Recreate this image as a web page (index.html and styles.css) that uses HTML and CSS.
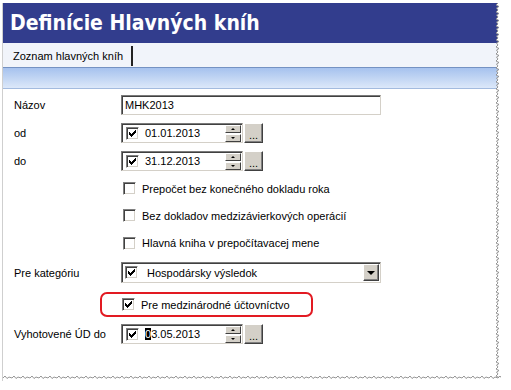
FILE: index.html
```html
<!DOCTYPE html>
<html lang="sk">
<head>
    <meta charset="UTF-8">
    <meta name="viewport" content="width=device-width, initial-scale=1.0">
    <title>Definície Hlavných kníh</title>
    <link rel="stylesheet" href="styles.css">
</head>
<body>
    <div class="window">
        <div class="titlebar">Definície Hlavných kníh</div>
        <div class="tabs"><span class="tab">Zoznam hlavných kníh</span></div>
        <div class="band"></div>

        <div class="form">
            <div class="label">Názov</div>
            <div class="ctl"><div class="textbox">MHK2013</div></div>

            <div class="label">od</div>
            <div class="ctl">
                <div class="datebox">
                    <span class="check"><svg width="7" height="7" viewBox="0 0 7 7"><path d="M6 0h1v1h-1z M5 1h2v1h-2z M0 2h1v1h-1z M4 2h3v1h-3z M0 3h2v1h-2z M3 3h3v1h-3z M0 4h5v1h-5z M1 5h3v1h-3z M2 6h1v1h-1z"/></svg></span>
                    <span class="date">01.01.2013</span>
                    <span class="spin"><span class="spin-btn up"></span><span class="spin-btn down"></span></span>
                </div>
                <span class="dots">...</span>
            </div>

            <div class="label">do</div>
            <div class="ctl">
                <div class="datebox">
                    <span class="check"><svg width="7" height="7" viewBox="0 0 7 7"><path d="M6 0h1v1h-1z M5 1h2v1h-2z M0 2h1v1h-1z M4 2h3v1h-3z M0 3h2v1h-2z M3 3h3v1h-3z M0 4h5v1h-5z M1 5h3v1h-3z M2 6h1v1h-1z"/></svg></span>
                    <span class="date">31.12.2013</span>
                    <span class="spin"><span class="spin-btn up"></span><span class="spin-btn down"></span></span>
                </div>
                <span class="dots">...</span>
            </div>

            <div class="label"></div>
            <div class="ctl checkrow"><span class="check"></span>Prepočet bez konečného dokladu roka</div>

            <div class="label"></div>
            <div class="ctl checkrow"><span class="check"></span>Bez dokladov medzizávierkových operácií</div>

            <div class="label"></div>
            <div class="ctl checkrow"><span class="check"></span>Hlavná kniha v prepočítavacej mene</div>

            <div class="label">Pre kategóriu</div>
            <div class="ctl">
                <div class="combo">
                    <span class="check"><svg width="7" height="7" viewBox="0 0 7 7"><path d="M6 0h1v1h-1z M5 1h2v1h-2z M0 2h1v1h-1z M4 2h3v1h-3z M0 3h2v1h-2z M3 3h3v1h-3z M0 4h5v1h-5z M1 5h3v1h-3z M2 6h1v1h-1z"/></svg></span>
                    <span class="combo-text">Hospodársky výsledok</span>
                    <span class="drop"></span>
                </div>
            </div>

            <div class="label"></div>
            <div class="ctl">
                <div class="mark">
                    <span class="check"><svg width="7" height="7" viewBox="0 0 7 7"><path d="M6 0h1v1h-1z M5 1h2v1h-2z M0 2h1v1h-1z M4 2h3v1h-3z M0 3h2v1h-2z M3 3h3v1h-3z M0 4h5v1h-5z M1 5h3v1h-3z M2 6h1v1h-1z"/></svg></span>
                    Pre medzinárodné účtovníctvo
                </div>
            </div>

            <div class="label">Vyhotovené ÚD do</div>
            <div class="ctl">
                <div class="datebox">
                    <span class="check"><svg width="7" height="7" viewBox="0 0 7 7"><path d="M6 0h1v1h-1z M5 1h2v1h-2z M0 2h1v1h-1z M4 2h3v1h-3z M0 3h2v1h-2z M3 3h3v1h-3z M0 4h5v1h-5z M1 5h3v1h-3z M2 6h1v1h-1z"/></svg></span>
                    <span class="date"><span class="sel">0</span>3.05.2013</span>
                    <span class="spin"><span class="spin-btn up"></span><span class="spin-btn down"></span></span>
                </div>
                <span class="dots">...</span>
            </div>
        </div>

        <!-- torn paper edges -->
        <svg class="torn-right" width="6" height="378">
            <defs>
                <pattern id="zr" width="6" height="7" patternUnits="userSpaceOnUse">
                    <path d="M3 0 L1 2 L4 3.5 L1.5 5 L3 7 L6 7 L6 0Z" fill="#fff"/>
                    <path d="M3 0 L1 2 L4 3.5 L1.5 5 L3 7" fill="none" stroke="#8a8a8a" stroke-width="0.9"/>
                </pattern>
            </defs>
            <rect width="6" height="378" fill="url(#zr)"/>
        </svg>
        <svg class="torn-bottom" width="498" height="6">
            <defs>
                <pattern id="zb" width="9" height="6" patternUnits="userSpaceOnUse">
                    <path d="M0 3 L2 1 L4 3.5 L6 2 L9 3 L9 6 L0 6Z" fill="#fff"/>
                    <path d="M0 3 L2 1 L4 3.5 L6 2 L9 3" fill="none" stroke="#8a8a8a" stroke-width="0.9"/>
                </pattern>
            </defs>
            <rect width="498" height="6" fill="url(#zb)"/>
        </svg>
    </div>
</body>
</html>
```

FILE: styles.css
```css
body {
    margin: 0;
    background-color: #fff;
    font-family: "Liberation Sans", Arial, sans-serif;
    font-size: 11px;
    color: #000;
}

.window {
    position: relative;
    margin: 3px 0 0 2px;
    width: 498px;
    height: 378px;
    border-left: 1px solid #cfcfcf;
    overflow: hidden;
    background-color: #fff;
}

.titlebar {
    height: 40px;
    line-height: 40px;
    padding-left: 7px;
    background-color: #323d8d;
    color: #fff;
    font-family: "Liberation Sans Narrow", "Arial Narrow", "DejaVu Sans Condensed", sans-serif;
    font-size: 21px;
    font-weight: bold;
}

.tabs {
    height: 24px;
    display: flex;
    align-items: flex-end;
    background-color: #f1f4fa;
}

.tab {
    height: 20px;
    line-height: 20px;
    margin-bottom: 1px;
    padding: 0 8px 0 10px;
    border-right: 2px solid #222;
}

.band {
    height: 20px;
    border-top: 1px solid #7592c2;
    border-bottom: 1px solid #a3bbdf;
    background: linear-gradient(#a6c2ee, #dce8f9);
}

.form {
    display: grid;
    grid-template-columns: 118px 260px;
    grid-template-rows: 28px 28px 28px 27px 27px 28px 31px 33px 26px;
    align-items: center;
    padding-top: 2px;
}

.label {
    padding-left: 11px;
}

.ctl {
    display: flex;
    align-items: center;
}

.checkrow {
    padding-left: 2px;
    gap: 6px;
}

.check {
    width: 13px;
    height: 13px;
    box-sizing: border-box;
    display: flex;
    align-items: center;
    justify-content: center;
    flex: none;
    border: 1px solid;
    border-color: #808080 #fff #fff #808080;
    box-shadow: inset 1px 1px #404040, inset -1px -1px #d4d0c8;
    background-color: #fff;
}

.check svg {
    shape-rendering: crispEdges;
}

.textbox, .datebox, .combo {
    box-sizing: border-box;
    border: 1px solid;
    border-color: #7a7a7a #d4d0c8 #d4d0c8 #7a7a7a;
    box-shadow: inset 1px 1px #404040;
    background-color: #fff;
}

.textbox {
    width: 260px;
    height: 20px;
    line-height: 18px;
    padding-left: 3px;
}

.datebox {
    width: 122px;
    height: 20px;
    display: flex;
    align-items: center;
    padding-left: 4px;
}

.date {
    margin-left: 6px;
}

.sel {
    background-color: #000;
    color: #fff;
}

.spin {
    margin-left: auto;
    margin-right: 1px;
    width: 16px;
    height: 17px;
    display: flex;
    flex-direction: column;
    justify-content: space-between;
}

.spin-btn {
    height: 8px;
    box-sizing: border-box;
    display: flex;
    align-items: center;
    justify-content: center;
    background-color: #d4d0c8;
    border: 1px solid;
    border-color: #fff #404040 #404040 #fff;
}

.spin-btn::after {
    content: "";
    border-left: 2px solid transparent;
    border-right: 2px solid transparent;
}

.up::after {
    border-bottom: 2px solid #000;
}

.down::after {
    border-top: 2px solid #000;
}

.dots {
    width: 19px;
    height: 20px;
    margin-left: 1px;
    box-sizing: border-box;
    background-color: #d4d0c8;
    border: 1px solid;
    border-color: #fff #404040 #404040 #fff;
    box-shadow: inset -1px -1px #808080;
    text-align: center;
    line-height: 22px;
}

.combo {
    width: 260px;
    height: 21px;
    display: flex;
    align-items: center;
    padding-left: 3px;
}

.combo-text {
    margin-left: 9px;
}

.drop {
    margin-left: auto;
    margin-right: 1px;
    width: 16px;
    height: 17px;
    box-sizing: border-box;
    display: flex;
    align-items: center;
    justify-content: center;
    background-color: #d4d0c8;
    border: 1px solid;
    border-color: #fff #404040 #404040 #fff;
    box-shadow: inset -1px -1px #808080;
}

.drop::after {
    content: "";
    border-left: 4px solid transparent;
    border-right: 4px solid transparent;
    border-top: 4px solid #000;
}

.mark {
    margin-left: -21px;
    width: 213px;
    height: 25px;
    box-sizing: border-box;
    display: flex;
    align-items: center;
    gap: 6px;
    padding-left: 20px;
    border: 2px solid #e21a22;
    border-radius: 7px;
}

.torn-right {
    position: absolute;
    top: 0;
    right: 0;
}

.torn-bottom {
    position: absolute;
    left: 0;
    bottom: 0;
}
```
